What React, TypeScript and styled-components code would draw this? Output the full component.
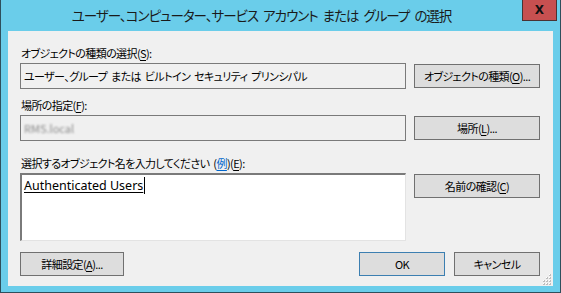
import * as React from "react"
import styled, { createGlobalStyle } from "styled-components"

const GlobalStyle = createGlobalStyle`
    html, body {
        margin: 0;
        padding: 0;
        background: #ffffff;
    }
    body {
        font-family: "Noto Sans CJK JP", "Noto Sans", sans-serif;
        font-feature-settings: "palt";
    }
`;

const Window = styled.div`
    width: 561px;
    height: 293px;
    box-sizing: border-box;
    background: #6acdea;
    border: 1px solid #2e4f5c;
    border-top: none;
    display: flex;
    flex-direction: column;
`;

const TitleBar = styled.div`
    height: 31px;
    display: flex;
    align-items: flex-start;
    flex-shrink: 0;
`;

const Title = styled.div`
    flex: 1;
    text-align: center;
    font-size: 13.5px;
    letter-spacing: -1px;
    word-spacing: 3px;
    line-height: 31px;
    height: 31px;
    color: #1a1a1a;
    white-space: nowrap;
`;

const CloseButton = styled.div`
    width: 35px;
    height: 21px;
    box-sizing: border-box;
    margin-right: 3px;
    background: #c75050;
    border: 1px solid #4a3333;
    border-top: none;
    display: flex;
    align-items: center;
    justify-content: center;
    font-family: "DejaVu Sans", sans-serif;
    font-weight: bold;
    font-size: 12px;
    color: #111;
`;

const Client = styled.div`
    position: relative;
    flex: 1;
    margin: 0 7px 7px 7px;
    background: #f0f0f0;
    padding: 15px 13px 10px 12px;
    display: flex;
    flex-direction: column;
    font-size: 11px;
    letter-spacing: -0.6px;
    word-spacing: 2px;
    color: #000;
`;

type LabelProps = { gap: number }

const FieldLabel = styled.div<LabelProps>`
    height: 17px;
    line-height: 15px;
    margin-top: ${props => props.gap}px;
    padding-left: 1px;
    white-space: nowrap;
`;

const Key = styled.span`
    text-decoration: underline;
    text-underline-offset: 2px;
`;

const Example = styled.span`
    color: #0066cc;
    text-decoration: underline;
    text-underline-offset: 2px;
`;

const FieldRow = styled.div`
    display: grid;
    grid-template-columns: 386px 126px;
    column-gap: 8px;
    align-items: start;
`;

const ReadOnlyBox = styled.div`
    height: 26px;
    box-sizing: border-box;
    border: 1px solid #7a7a7a;
    background: #f0f0f0;
    padding: 0 3px;
    line-height: 24px;
    white-space: nowrap;
    overflow: hidden;
`;

const Blurred = styled.span`
    color: #8a8a8a;
    letter-spacing: 0;
    filter: blur(1.3px);
`;

const NameBox = styled.div`
    height: 68px;
    box-sizing: border-box;
    border: 1px solid #e3e3e3;
    border-top-color: #7a7a7a;
    border-left-color: #7a7a7a;
    border-top-width: 2px;
    border-left-width: 2px;
    background: #ffffff;
    padding: 3px 2px;
    font-family: "Noto Sans", "Noto Sans CJK JP", sans-serif;
    font-size: 12.5px;
    letter-spacing: 0;
    word-spacing: 0;
    line-height: 16px;
`;

const Resolved = styled.span`
    text-decoration: underline;
    text-underline-offset: 2px;
    border-right: 1px solid #000;
    padding-right: 1px;
`;

type ButtonProps = { width?: number; focused?: boolean }

const Button = styled.div<ButtonProps>`
    height: 24px;
    width: ${props => (props.width ? `${props.width}px` : "auto")};
    box-sizing: border-box;
    margin-top: 1px;
    background: #dddddd;
    border: 1px solid ${props => (props.focused ? "#3c7fb1" : "#707070")};
    display: flex;
    align-items: center;
    justify-content: center;
    white-space: nowrap;
    line-height: 22px;
`;

const Footer = styled.div`
    margin-top: 10px;
    display: flex;
    align-items: center;
`;

const Spacer = styled.div`
    flex: 1;
`;

const FooterRight = styled.div`
    display: flex;
    gap: 9px;
`;

const Grip = styled.svg`
    position: absolute;
    right: 1px;
    bottom: 1px;
`;

const SizeGrip = () => (
    <Grip width="11" height="11" viewBox="0 0 11 11">
        {[
            [8, 0], [8, 3], [5, 3], [8, 6], [5, 6], [2, 6], [8, 9], [5, 9], [2, 9],
        ].map(([x, y], i) => (
            <g key={i}>
                <rect x={x} y={y} width="2" height="2" fill="#bdbdbd" />
                <rect x={x} y={y} width="1" height="1" fill="#ffffff" />
            </g>
        ))}
    </Grip>
);

const App = () => {
    return (
        <>
            <GlobalStyle />
            <Window>
                <TitleBar>
                    <Title>ユーザー、コンピューター、サービス アカウント または グループ の選択</Title>
                    <CloseButton>X</CloseButton>
                </TitleBar>
                <Client>
                    <FieldLabel gap={0}>オブジェクトの種類の選択(<Key>S</Key>):</FieldLabel>
                    <FieldRow>
                        <ReadOnlyBox>ユーザー、グループ または ビルトイン セキュリティ プリンシパル</ReadOnlyBox>
                        <Button>オブジェクトの種類(<Key>O</Key>)...</Button>
                    </FieldRow>

                    <FieldLabel gap={9}>場所の指定(<Key>F</Key>):</FieldLabel>
                    <FieldRow>
                        <ReadOnlyBox><Blurred>RMS.local</Blurred></ReadOnlyBox>
                        <Button>場所(<Key>L</Key>)...</Button>
                    </FieldRow>

                    <FieldLabel gap={15}>
                        選択するオブジェクト名を入力してください (<Example>例</Example>)(<Key>E</Key>):
                    </FieldLabel>
                    <FieldRow>
                        <NameBox><Resolved>Authenticated Users</Resolved></NameBox>
                        <Button>名前の確認(<Key>C</Key>)</Button>
                    </FieldRow>

                    <Footer>
                        <Button width={104}>詳細設定(<Key>A</Key>)...</Button>
                        <Spacer />
                        <FooterRight>
                            <Button width={86} focused>OK</Button>
                            <Button width={86}>キャンセル</Button>
                        </FooterRight>
                    </Footer>
                    <SizeGrip />
                </Client>
            </Window>
        </>
    )
}

export default App;
